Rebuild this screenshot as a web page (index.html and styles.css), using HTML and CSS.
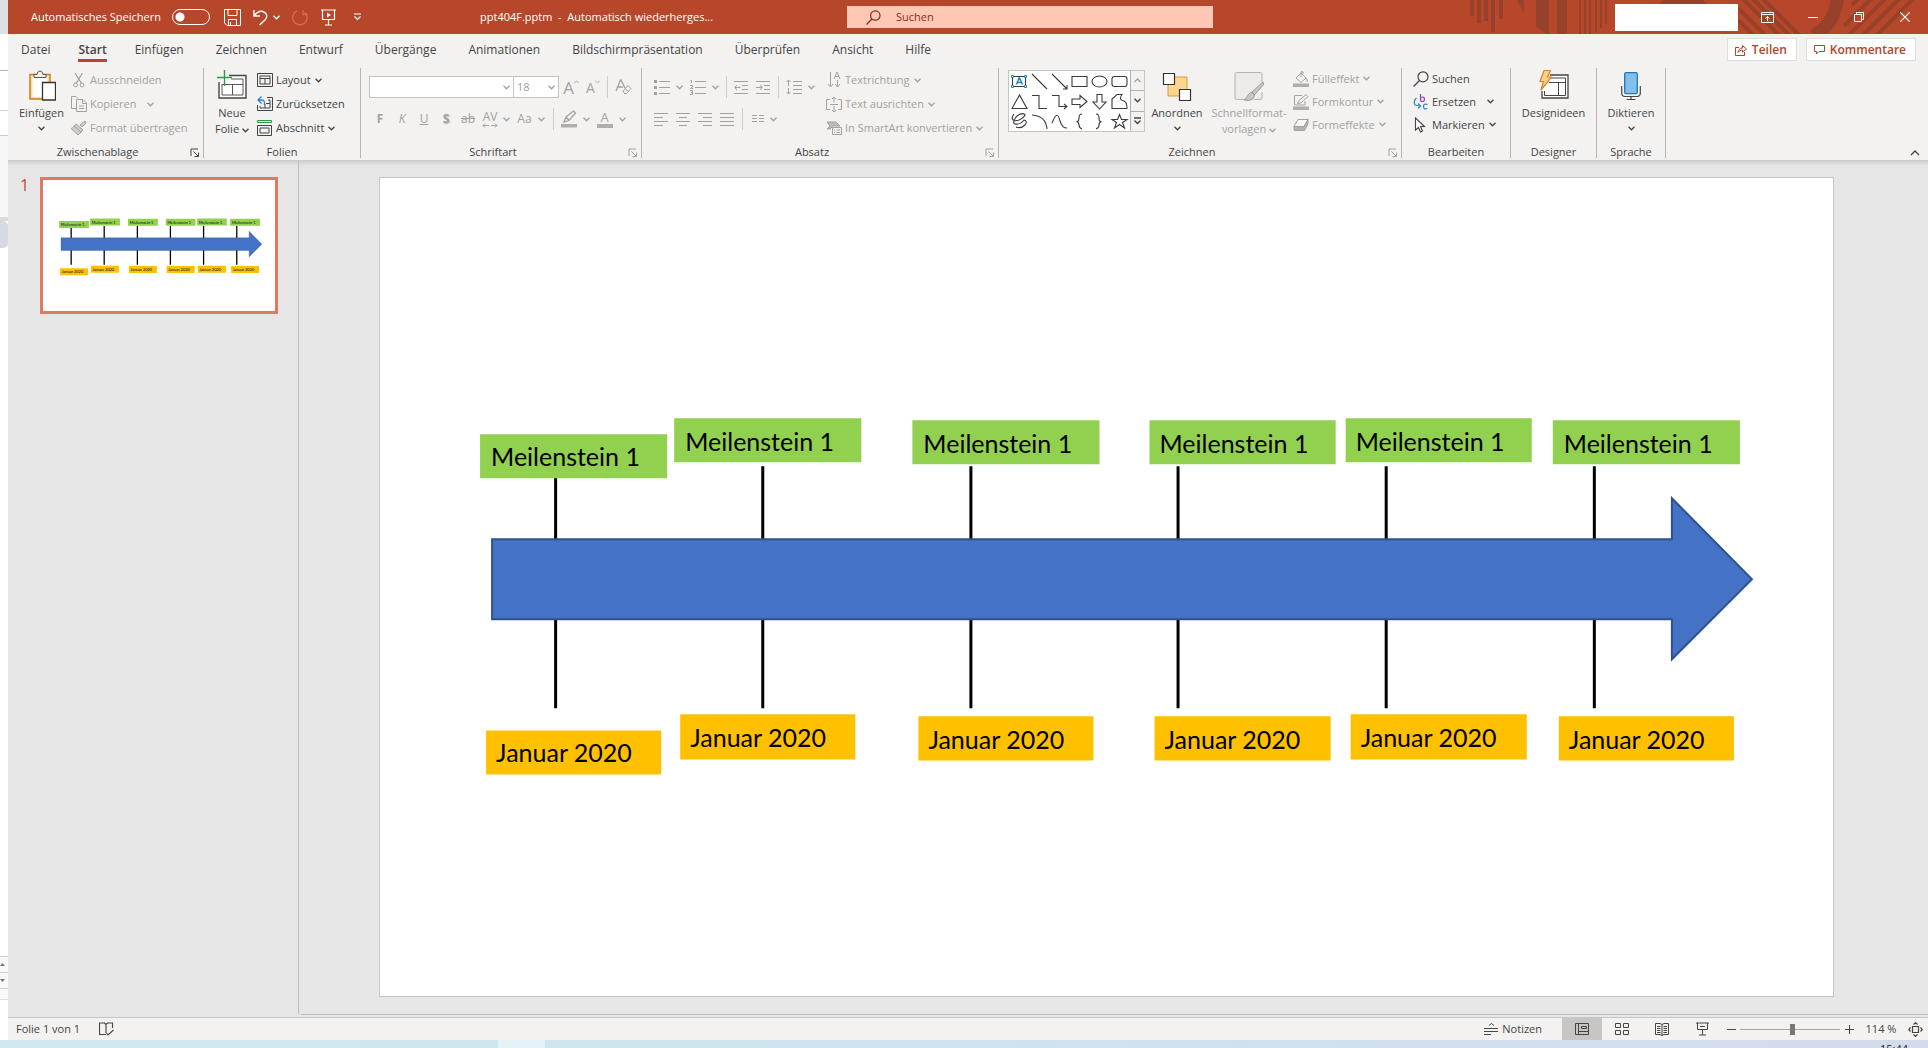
FILE: index.html
```html
<!DOCTYPE html>
<html lang="de">
<head>
<meta charset="utf-8">
<title>ppt404F.pptm - PowerPoint</title>
<meta name="viewport" content="width=device-width, initial-scale=1">
<link rel="stylesheet" href="styles.css">
</head>
<body>
<svg class="defs" aria-hidden="true">
  <symbol id="chev" viewBox="0 0 7 5"><path d="M.5 .8 3.500 3.800 6.500 .8" fill="none" stroke="currentColor" stroke-width="1.300"/></symbol>
  <symbol id="launch" viewBox="0 0 10 10"><path d="M1 8V1H8M3.500 3.500 8.500 8.500M8.500 4.500V8.500H4.500" fill="none" stroke="currentColor"/></symbol>
</svg>

<div class="desktop">
  <aside class="behind">
    <div class="behind-top"></div>
    <div class="behind-bar"></div>
    <div class="behind-tool"></div>
    <div class="behind-pane"></div>
    <div class="behind-thumb"></div>
    <div class="behind-page"></div>
    <div class="behind-step"><svg width="5" height="3" viewBox="0 0 5 3"><path d="M0 3 2.500 0 5 3Z" fill="#777"/></svg></div>
    <div class="behind-step"><svg width="5" height="3" viewBox="0 0 5 3"><path d="M0 0 2.500 3 5 0Z" fill="#777"/></svg></div>
    <div class="behind-step short"></div>
    <div class="behind-foot"></div>
  </aside>

  <div class="app">
    <header class="titlebar">
      <svg class="pattern" width="488" height="34" viewBox="0 0 488 34" aria-hidden="true">
        <g fill="#97402a">
          <path d="M30 0h4v16h-4zM37 0h4v23h-4zM44 0h4v21h-4zM51 0h4v32h-4zM59 0h4v19h-4zM77 0h7v13zM96 0h13v34h-2l-11-7zM117 0h10v34h-10z"/>
          <path d="M139 0h2v34h-2zM144 0h2v34h-2zM149 0h2v34h-2zM155 0h2v32h-2zM160 0h2v28h-2zM165 0h2v24h-2z"/>
          <path d="M218 6a30 30 0 0 1 50 0z"/>
        </g>
        <path d="M300 -4 342 38M310 -4 352 38M320 -4 362 38M298 8 328 38M298 20 316 38" stroke="#97402a" stroke-width="4"/>
        <path d="M397 -2Q396 22 374 36" fill="none" stroke="#97402a" stroke-width="13"/>
        <path d="M420 -3 412 5M434 -4 404 26M448 -4 408 36M462 -4 422 36M476 -4 436 36" stroke="#97402a" stroke-width="4"/>
      </svg>
      <label class="autosave">Automatisches Speichern <input type="checkbox" role="switch"></label>
      <div class="quick">
        <button class="q-save" aria-label="Speichern"><svg width="17" height="17" viewBox="0 0 17 17"><path d="M.5 .5H16.500V16.500H3L.5 14ZM4 .5V6.500H13V.5M4.500 16V10.500H12.500V16M6.500 13V16" fill="none" stroke="currentColor"/></svg></button>
        <button class="q-undo" aria-label="Rückgängig"><svg width="15" height="17" viewBox="0 0 15 17"><path d="M1 1V7H7M1.500 6.500C4 3 7 1.500 10 2.500C14 4 15 8 12 11L6.500 16" fill="none" stroke="currentColor" stroke-width="1.400"/></svg><svg width="7" height="5"><use href="#chev"/></svg></button>
        <button class="q-redo" aria-label="Wiederholen"><svg width="17" height="17" viewBox="0 0 17 17"><path d="M11 1V5.500H15.500M5 2A7.200 7.200 0 1 0 13 3.500L15 5.500" fill="none" stroke="currentColor" stroke-width="1.400"/></svg></button>
        <button class="q-show" aria-label="Präsentation starten"><svg width="15" height="17" viewBox="0 0 15 17"><path d="M0 1H15M1.500 1V10.500H13.500V1M7.500 10.500V16M4 16H11" fill="none" stroke="currentColor" stroke-width="1.200"/><path d="M6 3.500 10 6 6 8.500Z" fill="currentColor"/></svg></button>
        <button class="q-more" aria-label="Symbolleiste anpassen"><svg width="7" height="8" viewBox="0 0 7 8"><path d="M0 1H7M.5 3.500 3.500 6.500 6.500 3.500" fill="none" stroke="currentColor" stroke-width="1.200"/></svg></button>
      </div>
      <div class="doc-title">ppt404F.pptm&nbsp; -&nbsp; Automatisch wiederherges...</div>
      <label class="search">
        <svg width="15" height="15" viewBox="0 0 15 15"><circle cx="9.300" cy="5.500" r="4.700" fill="none" stroke="currentColor" stroke-width="1.200"/><path d="M6 9 .5 14.500" stroke="currentColor" stroke-width="1.200"/></svg>
        <input type="search" placeholder="Suchen" aria-label="Suchen">
      </label>
      <div class="account"></div>
      <div class="window-buttons">
        <button aria-label="Menüband-Anzeigeoptionen"><svg width="13" height="11" viewBox="0 0 13 11"><path d="M.5 .5H12.500V10.500H.5ZM.5 2.500H12.500M6.500 9V4.500M4.500 6.500 6.500 4.500 8.500 6.500" fill="none" stroke="currentColor"/></svg></button>
        <button aria-label="Minimieren"><svg width="10" height="10" viewBox="0 0 10 10"><path d="M0 5.500H10" stroke="currentColor"/></svg></button>
        <button aria-label="Verkleinern"><svg width="10" height="10" viewBox="0 0 10 10"><path d="M.5 2.500H7.500V9.500H.5ZM2.500 2.500V.5H9.500V7.500H7.500" fill="none" stroke="currentColor"/></svg></button>
        <button aria-label="Schließen"><svg width="10" height="10" viewBox="0 0 10 10"><path d="M0 0 10 10M10 0 0 10" stroke="currentColor" stroke-width="1.200"/></svg></button>
      </div>
    </header>

    <nav class="tabs">
      <button class="near">Datei</button>
      <button class="near active">Start</button>
      <button>Einfügen</button>
      <button>Zeichnen</button>
      <button>Entwurf</button>
      <button>Übergänge</button>
      <button>Animationen</button>
      <button>Bildschirmpräsentation</button>
      <button>Überprüfen</button>
      <button>Ansicht</button>
      <button>Hilfe</button>
      <div class="share">
        <button><svg width="12" height="12" viewBox="0 0 12 12"><path d="M4 3.500H.5V11.500H9.500V8M3 8.500C3.500 5.500 5 4 7.500 4V1.500L11.500 5 7.500 8V6C5.500 6 4 7 3 8.500Z" fill="none" stroke="currentColor"/></svg>Teilen</button>
        <button><svg width="11" height="10" viewBox="0 0 11 10"><path d="M.5 .5H10.500V6.500H5L2.500 9V6.500H.5Z" fill="none" stroke="currentColor"/></svg>Kommentare</button>
      </div>
    </nav>

    <div class="ribbon">
      <section class="group g-clip">
        <div class="body">
          <button class="big"><svg width="28" height="31" viewBox="0 0 28 31"><path d="M2 4.500H22V29H2Z" fill="#fbdca4" stroke="#d07f17" stroke-width="1.500"/><path d="M4.500 7H19.500V27H4.500Z" fill="#fff"/><path d="M6 7.500V4.500H9Q9.500 1 12 1T15 4.500H18V7.500Z" fill="#f3f2f1" stroke="#555"/><path d="M14.500 12.500H27.500V30H14.500Z" fill="#fff" stroke="#333" stroke-width="1.300"/></svg><span>Einfügen</span><svg width="7" height="5"><use href="#chev"/></svg></button>
          <div class="rows">
            <button disabled><svg width="16" height="16" viewBox="0 0 16 16"><path d="M4 1 10.500 11.500M11.500 1 5 11.500" fill="none" stroke="currentColor" stroke-width="1.300"/><circle cx="4.500" cy="13" r="1.900" fill="none" stroke="currentColor"/><circle cx="11" cy="13" r="1.900" fill="none" stroke="currentColor"/></svg>Ausschneiden</button>
            <button disabled><svg width="16" height="16" viewBox="0 0 16 16"><path d="M5 12.500H.5V.5H5L7 2.500M5.500 3.500H12L15.500 7V15.500H5.500ZM11.500 3.500V7.500H15.500M8 10H13M8 12.500H13" fill="none" stroke="currentColor"/></svg>Kopieren<svg class="far" width="7" height="5"><use href="#chev"/></svg></button>
            <button disabled><svg width="16" height="16" viewBox="0 0 16 16"><path d="M14 1 15 3 11 7 9 5ZM5 4 12 10 10 12 3 6ZM3 6C2 8 1 8 0 8.500L7 15 10 12" fill="#ccc" stroke="currentColor"/></svg>Format übertragen</button>
          </div>
        </div>
        <h2>Zwischenablage</h2>
        <button class="launch" aria-label="Zwischenablage öffnen"><svg width="10" height="10"><use href="#launch"/></svg></button>
      </section>

      <section class="group g-slides">
        <div class="body">
          <button class="big"><svg width="30" height="31" viewBox="0 0 30 31"><path d="M12 5.500H29V28H2V12" fill="#fff" stroke="#444" stroke-width="1.400"/><path d="M14 9H26V25H5V14M5 14.500H26M15.500 14.500V25" fill="none" stroke="#555"/><path d="M7.500 0V16M0 7.500H15" stroke="#2d9a4a" stroke-width="1.400"/></svg><span>Neue</span><span>Folie <svg width="7" height="5"><use href="#chev"/></svg></span></button>
          <div class="rows">
            <button><svg width="16" height="16" viewBox="0 0 16 16"><path d="M.5 1.500H15.500V14.500H.5ZM3 4H13V12H3ZM3 6.500H13M8 6.500V12" fill="none" stroke="#444"/></svg>Layout<svg width="7" height="5"><use href="#chev"/></svg></button>
            <button><svg width="16" height="16" viewBox="0 0 16 16"><path d="M10 1.500H15.500V14.500H.5V9M11 4H13V12H3V10M8 8V12M9 7.500H13" fill="none" stroke="#444"/><path d="M4.500 .5 1 4 4.500 7.500M1 4H5Q8 4 7.500 9" fill="none" stroke="#2a83c4" stroke-width="1.300"/></svg>Zurücksetzen</button>
            <button><svg width="16" height="16" viewBox="0 0 16 16"><path d="M.5 .5H14.500V2.500H.5Z" fill="#d5ecd9" stroke="#2d9a4a"/><path d="M.5 5.500H14.500V15.500H.5ZM3 8H12V13H3Z" fill="none" stroke="#444"/></svg>Abschnitt<svg width="7" height="5"><use href="#chev"/></svg></button>
          </div>
        </div>
        <h2>Folien</h2>
      </section>

      <section class="group g-font">
        <div class="body lines">
          <div class="line">
            <select class="face" disabled aria-label="Schriftart"><option></option></select>
            <select class="size" disabled aria-label="Schriftgrad"><option>18</option></select>
            <button class="w24" disabled aria-label="Schrift vergrößern"><b class="grow">A</b><svg class="sup" width="5" height="4" viewBox="0 0 7 5"><path d="M.5 4 3.500 1 6.500 4" fill="none" stroke="currentColor" stroke-width="1.400"/></svg></button>
            <button class="w20" disabled aria-label="Schrift verkleinern"><b class="shrink">A</b><svg class="sup" width="5" height="4"><use href="#chev"/></svg></button>
            <i class="sep"></i>
            <button class="w24" disabled aria-label="Formatierung löschen"><svg width="17" height="16" viewBox="0 0 17 16"><path d="M1 12 5.500 1H6L10 9M3 8H8" fill="none" stroke="currentColor" stroke-width="1.300"/><path d="M8 12 13 6.500 16 9.500 11.500 14.500H9.500ZM10 9.500 13.500 12.500" fill="none" stroke="currentColor"/></svg></button>
          </div>
          <div class="line letters">
            <button class="w22" disabled><b>F</b></button>
            <button class="w22" disabled><em>K</em></button>
            <button class="w22" disabled><u>U</u></button>
            <button class="w22" disabled><b class="shadow">S</b></button>
            <button class="w22" disabled><s>ab</s></button>
            <button class="w34" disabled aria-label="Zeichenabstand"><span class="spacing">AV<svg width="16" height="5" viewBox="0 0 16 5"><path d="M3 .5 1 2.500 3 4.500M1 2.500H7M13 .5 15 2.500 13 4.500M15 2.500H9" fill="none" stroke="currentColor"/></svg></span><svg width="7" height="5"><use href="#chev"/></svg></button>
            <button class="w36" disabled><span>Aa</span><svg width="7" height="5"><use href="#chev"/></svg></button>
            <i class="sep"></i>
            <button class="w36" disabled aria-label="Texthervorhebung"><svg width="16" height="18" viewBox="0 0 16 18"><path d="M0 14H16V17.500H0Z" fill="#b0aeac"/><path d="M3 12 5 7 12.500 1 14.500 3 8 10.500ZM5 7 8 10.500" fill="none" stroke="currentColor" stroke-width="1.300"/></svg><svg width="7" height="5"><use href="#chev"/></svg></button>
            <button class="w36" disabled aria-label="Schriftfarbe"><span class="ink">A</span><svg width="7" height="5"><use href="#chev"/></svg></button>
          </div>
        </div>
        <h2>Schriftart</h2>
        <button class="launch" disabled aria-label="Schriftart öffnen"><svg width="10" height="10"><use href="#launch"/></svg></button>
      </section>

      <section class="group g-para">
        <div class="body">
          <div class="lines">
            <div class="line">
              <button class="w36" disabled aria-label="Aufzählung"><svg width="16" height="16" viewBox="0 0 16 16"><path d="M5 2.500H16M5 8.500H16M5 14.500H16" stroke="currentColor"/><path d="M0 1H3V4H0ZM0 7H3V10H0ZM0 13H3V16H0Z" fill="currentColor"/></svg><svg width="7" height="5"><use href="#chev"/></svg></button>
              <button class="w36" disabled aria-label="Nummerierung"><svg width="16" height="16" viewBox="0 0 16 16"><path d="M5 2.500H16M5 8.500H16M5 14.500H16M.5 1.500H1.500V4M0 6.500H2.500V8L.5 9.500H3M0 11.500H2.500V15.500H0M1 13.500H2.500" fill="none" stroke="currentColor"/></svg><svg width="7" height="5"><use href="#chev"/></svg></button>
              <i class="sep"></i>
              <button class="w22" disabled aria-label="Einzug verkleinern"><svg width="14" height="13" viewBox="0 0 14 13"><path d="M0 .5H14M8 4.500H14M8 8.500H14M0 12.500H14M6.500 6.500H1M3 4 .8 6.500 3 9" fill="none" stroke="currentColor"/></svg></button>
              <button class="w22" disabled aria-label="Einzug vergrößern"><svg width="14" height="13" viewBox="0 0 14 13"><path d="M0 .5H14M8 4.500H14M8 8.500H14M0 12.500H14M0 6.500H6M4 4 6.200 6.500 4 9" fill="none" stroke="currentColor"/></svg></button>
              <i class="sep"></i>
              <button class="w36" disabled aria-label="Zeilenabstand"><svg width="16" height="16" viewBox="0 0 16 16"><path d="M7 2.500H16M7 6.500H16M7 10.500H16M7 14.500H16M2.500 1V7M.5 3 2.500 1 4.500 3M2.500 9V15M.5 13 2.500 15 4.500 13" fill="none" stroke="currentColor"/></svg><svg width="7" height="5"><use href="#chev"/></svg></button>
            </div>
            <div class="line">
              <button class="w22" disabled aria-label="Linksbündig"><svg width="14" height="13" viewBox="0 0 14 13"><path d="M0 .5H14M0 4.500H9M0 8.500H14M0 12.500H9" stroke="currentColor"/></svg></button>
              <button class="w22" disabled aria-label="Zentriert"><svg width="14" height="13" viewBox="0 0 14 13"><path d="M0 .5H14M3 4.500H11M0 8.500H14M3 12.500H11" stroke="currentColor"/></svg></button>
              <button class="w22" disabled aria-label="Rechtsbündig"><svg width="14" height="13" viewBox="0 0 14 13"><path d="M0 .5H14M5 4.500H14M0 8.500H14M5 12.500H14" stroke="currentColor"/></svg></button>
              <button class="w22" disabled aria-label="Blocksatz"><svg width="14" height="13" viewBox="0 0 14 13"><path d="M0 .5H14M0 4.500H14M0 8.500H14M0 12.500H14" stroke="currentColor"/></svg></button>
              <i class="sep"></i>
              <button class="w36" disabled aria-label="Spalten"><svg width="12" height="8" viewBox="0 0 12 8"><path d="M0 .5H5M7 .5H12M0 3.500H5M7 3.500H12M0 6.500H5M7 6.500H12" stroke="currentColor"/></svg><svg width="7" height="5"><use href="#chev"/></svg></button>
            </div>
          </div>
          <div class="rows">
            <button disabled><svg width="16" height="16" viewBox="0 0 16 16"><path d="M4.500 0V14M2 12 4.500 15 7 12M11.500 8V14M9 12 11.500 15 14 12M8 7 11 0 14 7M9 4.500H13" fill="none" stroke="currentColor"/></svg>Textrichtung<svg width="7" height="5"><use href="#chev"/></svg></button>
            <button disabled><svg width="16" height="16" viewBox="0 0 16 16"><path d="M4 3.500H.5V13.500H4M12 3.500H15.500V13.500H12M4 8.500H12M8 1V6.500M6 3 8 1 10 3M8 10V16M6 14 8 16 10 14" fill="none" stroke="currentColor"/></svg>Text ausrichten<svg width="7" height="5"><use href="#chev"/></svg></button>
            <button disabled><svg width="16" height="16" viewBox="0 0 16 16"><path d="M1 2H10L14 6H7L4 9H1L4 6Z" fill="#bbb" stroke="currentColor"/><path d="M6.500 7.500H15.500V14.500H6.500ZM8 10H9M10.500 10H14M8 12.500H9M10.500 12.500H14" fill="#f3f2f1" stroke="currentColor"/></svg>In SmartArt konvertieren<svg width="7" height="5"><use href="#chev"/></svg></button>
          </div>
        </div>
        <h2>Absatz</h2>
        <button class="launch" disabled aria-label="Absatz öffnen"><svg width="10" height="10"><use href="#launch"/></svg></button>
      </section>

      <section class="group g-draw">
        <div class="body">
          <div class="gallery">
            <svg width="121" height="60" viewBox="0 0 121 60" role="img" aria-label="Formen">
              <g fill="none" stroke="#3b3b3b" stroke-width="1.100">
                <path d="M3.500 5.500H16.500V15.500H3.500Z"/>
                <path d="M23 3 38 18M43 3 58 18M58 14V18H54M63 5.500H78V15.500H63Z"/>
                <ellipse cx="90.500" cy="10.500" rx="7.500" ry="5.500"/><rect x="103" y="5.500" width="15" height="10" rx="2.500"/>
                <path d="M3 37.500 10.500 24 18 37.500ZM23 24.500H30V37.500H38M43 24.500H50V35.500H58M55 33 58 35.500 55 38M63 28H71V24.500L78 30.500 71 36.500V33.500H63ZM88 23.500H93V31H97L90.500 38 84 31H88ZM103 37.500V28L108 23.500H113Q109 29 115 30Q118 31 118 37.500Z"/>
                <path d="M5 43C1 48 4 51 10 49Q16 46 16 43.500Q12 41 7 46Q3 52 6 53Q11 54 15 49Q19 50 16 54Q12 58 7 56M23 44Q37 45 38 58M43 52C47 42 49 42 51 50C53 57 56 57 58 57M73 43Q70 43 70 47T67.500 50.500Q70 51 70 54T73 58M87 43Q90 43 90 47T92.500 50.500Q90 51 90 54T87 58M110.500 43.500 112.500 48.500H118L113.500 51.500 115.500 57 110.500 53.500 105.500 57 107.500 51.500 103 48.500H108.500Z"/>
              </g>
              <path d="M7.500 13.500 10 7H10.500L13.500 13.500M8.500 11.500H12.500" fill="none" stroke="#1f8bb8" stroke-width="1.500"/>
              <path d="M2.500 4.500h2v2h-2zM15.500 4.500h2v2h-2zM2.500 14.500h2v2h-2zM15.500 14.500h2v2h-2z" fill="#fff" stroke="#1f8bb8"/>
            </svg>
            <div class="gallery-scroll">
              <button disabled aria-label="Nach oben"><svg width="7" height="5" viewBox="0 0 7 5"><path d="M.5 4 3.500 1 6.500 4" fill="none" stroke="currentColor" stroke-width="1.300"/></svg></button>
              <button aria-label="Nach unten"><svg width="7" height="5"><use href="#chev"/></svg></button>
              <button aria-label="Weitere Formen"><svg width="7" height="8" viewBox="0 0 7 8"><path d="M0 1H7M.5 3.500 3.500 6.500 6.500 3.500" fill="none" stroke="currentColor" stroke-width="1.300"/></svg></button>
            </div>
          </div>
          <button class="big"><svg width="30" height="31" viewBox="0 0 30 31"><path d="M6 7H25V26H6Z" fill="#fbd68c" stroke="#d89b33"/><path d="M1.500 3.500H12.500V14.500H1.500ZM17.500 19.500H28.500V30.500H17.500Z" fill="#fff" stroke="#333" stroke-width="1.200"/></svg><span>Anordnen</span><svg width="7" height="5"><use href="#chev"/></svg></button>
          <button class="big wide" disabled><svg width="30" height="31" viewBox="0 0 30 31"><path d="M11 29.500H2.500Q1 29.500 1 28V4Q1 2.500 2.500 2.500H26.500Q28 2.500 28 4V12M28 22V28Q28 29.500 26.500 29.500H20" fill="#ecebea" stroke="#b5b3b1"/><path d="M29 12 18 22 20.500 25 30 14ZM18 22C14 23 14 27 10 30C16 31 20 30 20.500 25Z" fill="#c9c7c5" stroke="#9c9a98"/></svg><span>Schnellformat-</span><span>vorlagen <svg width="7" height="5"><use href="#chev"/></svg></span></button>
          <div class="rows tight">
            <button disabled><svg width="16" height="16" viewBox="0 0 16 16"><path d="M0 12.500H16V16H0Z" fill="#b0aeac"/><path d="M3 7 8 2 13 7 8 11.500ZM8 6V1Q9 0 10 1V3M13 7Q15 9 14 11" fill="none" stroke="currentColor"/></svg>Fülleffekt<svg width="7" height="5"><use href="#chev"/></svg></button>
            <button disabled><svg width="16" height="16" viewBox="0 0 16 16"><path d="M0 12.500H16V16H0Z" fill="#b0aeac"/><path d="M9 1.500H1.500V11H12V7M4.500 9.500 6 6.500 13 .5 15 2.500 8 9Z" fill="none" stroke="currentColor"/></svg>Formkontur<svg width="7" height="5"><use href="#chev"/></svg></button>
            <button disabled><svg width="16" height="16" viewBox="0 0 16 16"><path d="M1 9.500 5 2.500H15L11 9.500Z" fill="#f8f8f8" stroke="currentColor"/><path d="M1 9.500H11L15 2.500V7L11.500 13.500H2Q1 13.500 1 12Z" fill="#b5b3b1" stroke="currentColor"/></svg>Formeffekte<svg width="7" height="5"><use href="#chev"/></svg></button>
          </div>
        </div>
        <h2>Zeichnen</h2>
        <button class="launch" disabled aria-label="Zeichnen öffnen"><svg width="10" height="10"><use href="#launch"/></svg></button>
      </section>

      <section class="group g-edit">
        <div class="body">
          <div class="rows tight">
            <button><svg width="16" height="16" viewBox="0 0 16 16"><circle cx="10" cy="5.800" r="5" fill="none" stroke="#444" stroke-width="1.200"/><path d="M6.500 9.500.5 15.500" stroke="#444" stroke-width="1.300"/></svg>Suchen</button>
            <button><svg width="16" height="16" viewBox="0 0 16 16"><path d="M7.500 0V7.500M7.500 5Q7.500 3 9.500 3T11.500 5.200 9.500 7.500 7.500 5.500" fill="none" stroke="#9b3fb0" stroke-width="1.200"/><path d="M3.500 4Q0 7 2 11L7 12M5 9.500 7.500 12 5 14.500M14.500 10.500Q10.500 9 10.500 12.500T14.500 14.500" fill="none" stroke="#2a83c4" stroke-width="1.200"/></svg>Ersetzen<svg class="far" width="7" height="5"><use href="#chev"/></svg></button>
            <button><svg width="16" height="16" viewBox="0 0 16 16"><path d="M2.500 1V13L5.500 10.500 7.500 15 9.500 14 7.500 9.500H11.500Z" fill="#fff" stroke="#444" stroke-width="1.100"/></svg>Markieren<svg width="7" height="5"><use href="#chev"/></svg></button>
          </div>
        </div>
        <h2>Bearbeiten</h2>
      </section>

      <section class="group g-design">
        <div class="body">
          <button class="big"><svg width="30" height="31" viewBox="0 0 30 31"><path d="M11 5H29V28H3V21" fill="#fff" stroke="#444" stroke-width="1.300"/><path d="M10 8H26.500V25.500H5.500V21M10 12.500H26.500M19.500 12.500V25.500" fill="none" stroke="#444"/><path d="M5 .5H11.500L8.500 7H12.500L2 20 4.500 11.500H1Z" fill="#fbd28a" stroke="#d9822b" stroke-width="1.200"/></svg><span>Designideen</span></button>
        </div>
        <h2>Designer</h2>
      </section>

      <section class="group g-speech">
        <div class="body">
          <button class="big"><svg width="20" height="31" viewBox="0 0 20 31"><rect x="3.700" y="2.700" width="12.600" height="21" rx="1.500" fill="#83beec" stroke="#1f77b4" stroke-width="1.300"/><path d="M.7 16V23Q.7 26.500 4 26.500H16Q19.300 26.500 19.300 23V16M10 26.500V29.500M5.500 29.500H14.500" fill="none" stroke="#444" stroke-width="1.200"/></svg><span>Diktieren</span><svg width="7" height="5"><use href="#chev"/></svg></button>
        </div>
        <h2>Sprache</h2>
      </section>
      <button class="collapse" aria-label="Menüband reduzieren"><svg width="10" height="7" viewBox="0 0 10 7"><path d="M1 6 5 2 9 6" fill="none" stroke="currentColor" stroke-width="1.300"/></svg></button>
    </div>

    <main class="workspace">
      <aside class="thumbs">
        <span class="num">1</span>
        <a class="thumb" href="#slide" aria-label="Folie 1"><svg viewBox="0 0 1454 819"><use href="#art"/></svg></a>
      </aside>
      <div class="stage">
        <svg class="slide" id="slide" viewBox="0 0 1454 819">
          <g id="art">
            <path class="pins" d="M176.500 289V531M383.500 289V531M591.500 289V531M798.500 289V531M1006.500 289V531M1214.500 289V531"/>
            <path d="M113 362H1292V321L1372 402 1292 482V442H113Z" fill="#4472c4" stroke="#2f528f" stroke-width="2"/>
            <path d="M101 257h187v44h-187zM295 241h187v44h-187zM533 243h187v44h-187zM770 243h186v44h-186zM966 241h186v44h-186zM1173 243h187v44h-187z" fill="#92d050"/>
            <path d="M107 553h175v44h-175zM301 537h175v45h-175zM539 539h175v44h-175zM775 539h176v44h-176zM971 537h176v45h-176zM1179 539h175v44h-175z" fill="#ffc000"/>
            <g class="caption">
              <text x="112" y="289">Meilenstein 1</text>
              <text x="306" y="274">Meilenstein 1</text>
              <text x="544" y="276">Meilenstein 1</text>
              <text x="780" y="276">Meilenstein 1</text>
              <text x="976" y="274">Meilenstein 1</text>
              <text x="1184" y="276">Meilenstein 1</text>
              <text x="117" y="585">Januar 2020</text>
              <text x="311" y="570">Januar 2020</text>
              <text x="549" y="572">Januar 2020</text>
              <text x="785" y="572">Januar 2020</text>
              <text x="981" y="570">Januar 2020</text>
              <text x="1189" y="572">Januar 2020</text>
            </g>
          </g>
        </svg>
      </div>
    </main>

    <footer class="status">
      <span>Folie 1 von 1</span>
      <button class="proof" aria-label="Rechtschreibung"><svg width="15" height="14" viewBox="0 0 15 14"><path d="M7 12.500H.5V1H5.500L7 2.500 8.500 1H13.500V6M7 2.500V10M6.500 10 9 13 14.500 8" fill="none" stroke="currentColor" stroke-width="1.100"/></svg></button>
      <div class="status-right">
        <button class="notes"><svg width="14" height="12" viewBox="0 0 14 12"><path d="M5 2.500 7.500 .5 10 2.500M0 5.500H14M0 8.500H14M0 11.500H7" fill="none" stroke="currentColor"/></svg>Notizen</button>
        <button class="view on" aria-label="Normal"><svg width="14" height="12" viewBox="0 0 14 12"><path d="M.5 .5H13.500V11.500H.5ZM3.500 .5V11.500M3.500 8.500H13.500M6.500 3.500H11.500V5.500H6.500Z" fill="none" stroke="currentColor"/></svg></button>
        <button class="view" aria-label="Foliensortierung"><svg width="14" height="12" viewBox="0 0 14 12"><path d="M.5 .5H5.500V4.500H.5ZM8.500 .5H13.500V4.500H8.500ZM.5 7.500H5.500V11.500H.5ZM8.500 7.500H13.500V11.500H8.500Z" fill="none" stroke="currentColor"/></svg></button>
        <button class="view" aria-label="Leseansicht"><svg width="14" height="13" viewBox="0 0 14 13"><path d="M.5 .5H5L7 1.500 9 .5H13.500V11.500H9L7 12.500 5 11.500H.5ZM7 1.500V12.500M2 3.500H5.500M2 5.500H5.500M2 7.500H5.500M2 9.500H5.500M8.500 3.500H12M8.500 5.500H12M8.500 7.500H12M8.500 9.500H12" fill="none" stroke="currentColor"/></svg></button>
        <button class="view" aria-label="Bildschirmpräsentation"><svg width="13" height="14" viewBox="0 0 13 14"><path d="M0 1H13M1.500 1V7.500H11.500V1M6.500 7.500V13M3 13H10M4 4.500H9" fill="none" stroke="currentColor"/></svg></button>
        <button class="zoom-step" aria-label="Verkleinern"><svg width="9" height="9" viewBox="0 0 9 9"><path d="M0 4.500H9" stroke="currentColor"/></svg></button>
        <input class="zoom" type="range" min="0" max="100" value="53" aria-label="Zoom">
        <button class="zoom-step" aria-label="Vergrößern"><svg width="9" height="9" viewBox="0 0 9 9"><path d="M0 4.500H9M4.500 0V9" stroke="currentColor"/></svg></button>
        <button class="percent">114 %</button>
        <button class="fit" aria-label="An Fenster anpassen"><svg width="15" height="15" viewBox="0 0 15 15"><path d="M4.500 4.500H10.500V10.500H4.500ZM5.500 2.500 7.500 .7 9.500 2.500M5.500 12.500 7.500 14.300 9.500 12.500M2.500 5.500.7 7.500 2.500 9.500M12.500 5.500 14.300 7.500 12.500 9.500" fill="none" stroke="currentColor" stroke-width="1.200"/></svg></button>
      </div>
    </footer>
  </div>

  <div class="taskbar"><span class="task"></span><time>15:44</time></div>
</div>
</body>
</html>
```
FILE: styles.css
```css
* { box-sizing: border-box; }

body {
  margin: 0;
  font: 12px/16px "Open Sans", "Noto Sans", sans-serif;
  color: #444;
  overflow: hidden;
}

button {
  margin: 0;
  padding: 0;
  border: 0;
  background: none;
  color: inherit;
  font: inherit;
  display: flex;
  align-items: center;
  justify-content: center;
  white-space: nowrap;
}

svg { flex: none; display: block; }
.defs { position: absolute; width: 0; height: 0; }

.desktop {
  display: grid;
  grid-template: 1fr 8px / 8px minmax(0, 1fr);
  height: 100vh;
}

/* window peeking out on the left */
.behind { display: flex; flex-direction: column; background: #fff; }
.behind-top { height: 34px; background: #dfe0e6; }
.behind-bar { height: 37px; border-bottom: 1px solid #b5b5b5; }
.behind-tool { height: 40px; border-bottom: 1px solid #d0d0d0; }
.behind-pane { height: 110px; background: linear-gradient(#fff 24px, #ccc 24px 25px, #f7f7f8 25px 106px, #d8dae2 106px); }
.behind-thumb { height: 27px; border-radius: 0 5px 5px 0; background: #d8dae2; }
.behind-page { flex: 1; }
.behind-step { height: 16px; border-top: 1px solid #ccc; padding-top: 6px; background: #f9f9f9; }
.behind-step.short { height: 12px; border-bottom: 1px solid #ddd; }
.behind-foot { height: 40px; }

.app { display: flex; flex-direction: column; min-width: 0; background: #f3f2f1; }

/* title bar */
.titlebar {
  position: relative;
  display: flex;
  align-items: center;
  height: 34px;
  padding-left: 23px;
  background: #b7472a;
  color: #fff;
  font-size: 11px;
}
.pattern { position: absolute; right: 0; top: 0; }
.autosave { display: flex; align-items: center; justify-content: space-between; width: 179px; white-space: nowrap; }
.autosave input {
  appearance: none;
  width: 38px;
  height: 16px;
  margin: 0;
  border: 1px solid #fff;
  border-radius: 8px;
  background: radial-gradient(circle at 7px 7px, #fff 4px, transparent 5px);
}
.quick { display: flex; align-items: center; gap: 12px; width: 270px; padding-left: 14px; }
.q-undo { gap: 5px; }
.q-redo { color: #e0674c; }
.q-more { margin-left: 6px; }
.doc-title { width: 367px; white-space: nowrap; }
.search {
  display: flex;
  align-items: center;
  gap: 15px;
  width: 366px;
  height: 22px;
  padding-left: 19px;
  background: #ffc8b4;
  color: #8b2a1c;
}
.search input { flex: 1; min-width: 0; border: 0; padding: 0; background: none; font: inherit; color: inherit; }
.search input::placeholder { color: inherit; opacity: 1; }
.account { position: relative; width: 123px; height: 27px; margin: 0 6px 0 auto; background: #fff; }
.window-buttons { position: relative; display: flex; }
.window-buttons button { width: 46px; height: 34px; }

/* tabs */
.tabs { display: flex; height: 33px; padding-left: 13px; align-items: flex-start; }
.tabs > button { height: 28px; margin-right: 32px; border-bottom: 3px solid transparent; padding-top: 6px; }
.tabs > .near { margin-right: 28px; }
.tabs > .active { font-weight: 600; border-color: #b7472a; }
.share { display: flex; gap: 9px; margin: 4px 12px 0 auto; }
.share button {
  height: 23px;
  padding: 0 9px 0 7px;
  gap: 5px;
  border: 1px solid #e1dfdd;
  background: #fff;
  color: #b0442a;
  font-weight: 600;
}

/* ribbon */
.ribbon { position: relative; display: flex; height: 93px; padding-bottom: 2px; font-size: 11px; }
.group { position: relative; display: flex; flex-direction: column; border-right: 1px solid #b8b6b4; margin-top: 1px; }
.group h2 { margin: 0; font: inherit; text-align: center; line-height: 12px; }
.g-clip h2, .g-font h2, .g-para h2, .g-draw h2 { padding-right: 16px; }
.body { display: flex; flex: 1; }
button:disabled { color: #a3a1a0; }
.launch { position: absolute; right: 3px; bottom: 0; }
.collapse { position: absolute; right: 8px; bottom: 4px; }

.big { flex-direction: column; justify-content: flex-start; align-self: flex-start; padding-top: 2px; }
.big > svg:first-child { margin-bottom: 4px; }
.big > span { line-height: 16px; }
.big > svg:last-child { margin-top: 5px; }
.big span svg { display: inline-block; vertical-align: middle; }
.rows { display: flex; flex-direction: column; align-items: flex-start; }
.rows button { height: 24px; gap: 3px; }
.rows button svg:last-child:not(:first-child) { margin-left: 1px; }
.rows button svg.far:last-child { margin-left: 8px; }
.rows.tight button { height: 23px; padding-bottom: 2px; }

.lines { display: flex; flex-direction: column; gap: 10px; padding-top: 8px; }
.line { display: flex; height: 22px; }
.line button { height: 22px; }
.letters { font-size: 12px; }
.w20 { width: 20px; }
.w22 { width: 22px; }
.w24 { width: 24px; }
.w34 { width: 34px; gap: 5px; }
.w36 { width: 36px; gap: 6px; }
.sep { width: 8px; display: flex; justify-content: center; }
.sep::before { content: ""; width: 1px; background: #cfcdcb; }
.line select {
  appearance: none;
  height: 22px;
  border: 1px solid #c4c2c0;
  border-radius: 0;
  padding: 0 3px;
  color: #a3a1a0;
  opacity: 1;
  font: inherit;
  background: #fff url("data:image/svg+xml,%3Csvg xmlns='http://www.w3.org/2000/svg' width='7' height='5'%3E%3Cpath d='M.5 .8 3.5 3.8 6.5 .8' fill='none' stroke='%23a3a1a0' stroke-width='1.3'/%3E%3C/svg%3E") no-repeat right 3px center;
}
.line .face { width: 145px; }
.line .size { width: 46px; margin-left: -1px; }
.grow { font: 17px "Open Sans", sans-serif; }
.shrink { font: 14px "Open Sans", sans-serif; }
.sup { align-self: flex-start; margin-top: 4px; }
.shadow { text-shadow: 1px 1px 1px #bbb; }
.spacing { line-height: 12px; }
.ink { border-bottom: 4px solid #b0aeac; width: 16px; line-height: 14px; font-size: 13px; }

.g-clip { width: 196px; }
.g-clip .big { width: 67px; margin-right: 4px; }
.g-clip .rows { margin-left: -8px; }
.g-slides { width: 157px; }
.g-slides .big { width: 53px; padding-left: 3px; }
.g-font { width: 281px; }
.g-font .lines { padding-left: 8px; }
.g-para { width: 357px; }
.g-para .lines { width: 184px; padding-left: 8px; }
.g-draw { width: 403px; }
.g-edit { width: 109px; }
.g-edit .rows { padding-left: 11px; }
.g-design { width: 86px; }
.g-speech { width: 69px; }
.g-design .big, .g-speech .big { width: 100%; }
.g-draw .big { width: 62px; margin-left: 1px; }
.g-draw .wide { width: 80px; margin-right: 4px; }

.gallery { display: flex; height: 62px; margin: 2px 0 0 9px; border: 1px solid #c8c6c4; background: #fff; }
.gallery-scroll { display: flex; flex-direction: column; width: 14px; }
.gallery-scroll button { flex: 1; border: 1px solid #b0aeac; border-width: 0 0 1px 1px; background: #f3f2f1; }
.gallery-scroll button:last-child { border-bottom: 0; }

/* slide area */
.workspace {
  flex: 1;
  display: flex;
  min-height: 0;
  background: linear-gradient(#cbcbcb, #e6e6e6 6px);
}
.thumbs {
  display: flex;
  align-items: flex-start;
  gap: 11px;
  width: 291px;
  margin-bottom: 3px;
  padding: 17px 20px 0 12px;
  border-right: 1px solid #bcbcbc;
}
.num { font-size: 16px; line-height: 16px; color: #c8492b; width: 9px; }
.thumb { --pin: 8px; flex: 1; border: 3px solid #dc7a62; background: #fff; }
.stage { flex: 1; min-width: 0; margin: 0 0 2px 2px; padding: 17px 94px 0 78px; border-bottom: 1px solid #bcbcbc; }
.slide { width: 100%; height: auto; background: #fff; outline: 1px solid #c6c6c6; outline-offset: -1px; }
.pins { stroke: #000; stroke-width: var(--pin, 3px); }
.caption { font: 25px Lato, "Open Sans", sans-serif; fill: #000; }

/* status bar */
.status {
  display: flex;
  align-items: center;
  height: 23px;
  padding-left: 8px;
  border-top: 1px solid #c8c6c4;
  font-size: 11px;
}
.proof { margin-left: 19px; }
.status-right { display: flex; align-items: center; height: 22px; margin-left: auto; padding-right: 2px; }
.notes { gap: 4px; margin-right: 20px; }
.view { width: 40px; height: 22px; }
.view.on { background: #c8c6c4; }
.zoom-step { width: 18px; }
.zoom { appearance: none; width: 100px; height: 12px; margin: 0; background: linear-gradient(#a8a6a4, #a8a6a4) no-repeat center / 100% 1px; }
.zoom::-webkit-slider-thumb { appearance: none; width: 5px; height: 11px; background: #777; }
.percent { width: 46px; }
.fit { width: 22px; }

/* strip of the taskbar */
.taskbar {
  grid-column: 1 / -1;
  position: relative;
  overflow: hidden;
  display: flex;
  justify-content: space-between;
  padding: 0 20px 0 498px;
  background: linear-gradient(90deg, #cfe8ef, #cfe4ee 50%, #d4dbeb);
}
.task { width: 47px; background: #e6f3f6; }
.taskbar time { padding-top: 3px; font-size: 11px; line-height: 12px; color: #222; }
```
